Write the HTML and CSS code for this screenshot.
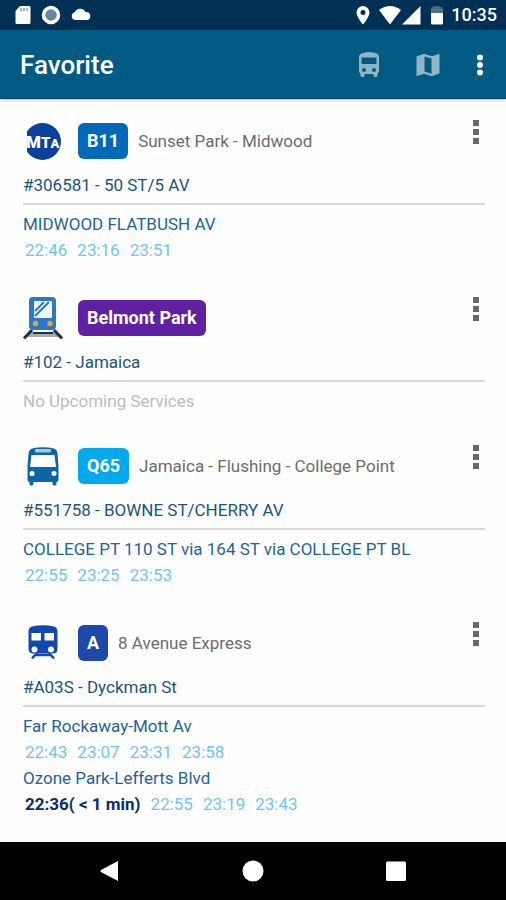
FILE: index.html
```html
<!DOCTYPE html>
<html lang="en">
<head>
<meta charset="utf-8">
<meta name="viewport" content="width=device-width, initial-scale=1">
<title>Favorite</title>
<link rel="stylesheet" href="styles.css">
</head>
<body>
<div class="status">
  <div class="status-left">
    <svg width="18" height="20" viewBox="0 0 18 20"><path d="M6 1h9q1.500 0 1.500 1.500v15q0 1.500-1.500 1.500H3q-1.500 0-1.500-1.500V6z" fill="#fff"/><path d="M7 3v3M10 3v3M13 3v3" stroke="#8d99a8" stroke-width="1.500"/></svg>
    <svg width="20" height="20" viewBox="0 0 20 20"><circle cx="10" cy="10" r="7.500" fill="#68869c" stroke="#fff" stroke-width="3.500"/></svg>
    <svg width="22" height="20" viewBox="0 0 22 20"><path d="M5 15a4 4 0 0 1-.3-7.800A6 6 0 0 1 15.500 7a4 4 0 0 1 1.500 8z" fill="#fff"/></svg>
  </div>
  <div class="status-right">
    <svg width="14" height="20" viewBox="0 0 14 20"><path fill-rule="evenodd" d="M7 1a6.500 6.500 0 0 1 6.500 6.500C13.500 12 7 19.500 7 19.500S.5 12 .5 7.500A6.500 6.500 0 0 1 7 1zm0 4a2.500 2.500 0 1 0 0 5 2.500 2.500 0 0 0 0-5z" fill="#fff"/></svg>
    <svg class="wifi" width="22" height="20" viewBox="0 0 22 20"><path d="M0 5Q11-3 22 5L11 19.500z" fill="#fff"/></svg>
    <svg width="19" height="20" viewBox="0 0 19 20"><path d="M18.500 1v18.500H0z" fill="#fff"/></svg>
    <svg class="battery" width="14" height="20" viewBox="0 0 14 20"><path d="M1 8V4q0-2 2-2 4-2 8 0 2 0 2 2v4z" fill="#4d7085"/><path d="M1 8h12v10q0 1.500-1.500 1.500h-9Q1 19.500 1 18z" fill="#fff"/></svg>
    <span class="clock">10:35</span>
  </div>
</div>
<header class="bar">
  <h1>Favorite</h1>
  <button class="action" aria-label="Buses"><svg width="22" height="26" viewBox="0 0 22 26"><path fill-rule="evenodd" d="M5 1Q11-1 17 1q4 .8 4 4v14q0 1.500-1.500 2.500v2q0 1.500-1.500 1.500h-1q-1.500 0-1.500-1.500V22h-9v1.500Q6.500 25 5 25H4q-1.500 0-1.500-1.500v-2Q1 20.500 1 19V5q0-3.200 4-4zM3.500 5.500V12h15V5.500zM6 16a2 2 0 1 0 0 4 2 2 0 0 0 0-4zm10 0a2 2 0 1 0 0 4 2 2 0 0 0 0-4z" fill="#8fb5c6"/></svg></button>
  <button class="action" aria-label="Map"><svg width="24" height="24" viewBox="0 0 24 24"><path fill-rule="evenodd" d="M.5 3.500L8 .8l8 2.400 7.500-2.400v19.700L16 23.200l-8-2.400-7.500 2.400zM8.500 3.500v15l7 2.200V5.600z" fill="#8fb5c6"/></svg></button>
  <button class="action more" aria-label="More options"><svg width="8" height="22" viewBox="0 0 8 22"><g fill="#fff"><circle cx="4" cy="3.500" r="3"/><circle cx="4" cy="11" r="3"/><circle cx="4" cy="18.500" r="3"/></g></svg></button>
</header>
<main class="list">
  <article class="card">
    <div class="head">
      <svg class="mode" viewBox="0 0 40 44"><circle cx="19.500" cy="22.500" r="18.500" fill="#0b419b"/><path d="M0 13l4-2v24l-4-2z" fill="#fff"/><text class="mta" x="3" y="29"><tspan font-size="17">M</tspan><tspan font-size="15">T</tspan><tspan font-size="13">A</tspan></text></svg>
      <span class="badge blue">B11</span><span class="name">Sunset Park - Midwood</span>
      <button class="menu" aria-label="Options"><svg width="8" height="26" viewBox="0 0 8 26"><path d="M1 1h6v6H1zM1 10h6v6H1zM1 19h6v6H1z" fill="#686868"/></svg></button>
    </div>
    <p class="stop">#306581 - 50 ST/5 AV</p>
    <div class="services">
      <p>MIDWOOD FLATBUSH AV</p>
      <div class="times"><time>22:46</time><time>23:16</time><time>23:51</time></div>
    </div>
  </article>
  <article class="card">
    <div class="head">
      <svg class="mode" viewBox="0 0 40 44"><path d="M8 36h24l6 5H2z" fill="#aaa"/><path d="M9 34L1 42.500M31 34l8 8.500" stroke="#193348" stroke-width="3"/><path d="M10 37h20" stroke="#193348" stroke-width="2"/><rect x="6" y="1" width="27" height="33" rx="4" fill="#2d78c5"/><rect x="11" y="5" width="18" height="17" rx="1" fill="#edf4f8"/><path d="M12 15l9-9M12 20L26 6" stroke="#2d78c5" stroke-width="2"/><circle cx="12.500" cy="27.500" r="2.700" fill="#e9a52d"/><circle cx="27" cy="27.500" r="2.700" fill="#e9a52d"/></svg>
      <span class="badge purple">Belmont Park</span>
      <button class="menu" aria-label="Options"><svg width="8" height="26" viewBox="0 0 8 26"><path d="M1 1h6v6H1zM1 10h6v6H1zM1 19h6v6H1z" fill="#686868"/></svg></button>
    </div>
    <p class="stop">#102 - Jamaica</p>
    <p class="empty">No Upcoming Services</p>
  </article>
  <article class="card">
    <div class="head">
      <svg class="mode" viewBox="0 0 40 44"><path fill-rule="evenodd" d="M9 4.500Q20 2 31 4.500q3 1 3.500 5l1 13V36q0 1.500-2 2v2q0 1.500-2 1.500t-2-1.500v-2h-19v2q0 1.500-2 1.500T6.500 40v-2q-2-.5-2-2V22.500l1-13q.5-4 3.500-5zM8.500 11L7 23h26l-1.500-12zM9 27a2.500 2.500 0 1 0 0 5 2.500 2.500 0 0 0 0-5zm22 0a2.500 2.500 0 1 0 0 5 2.500 2.500 0 0 0 0-5z" fill="#0c65a5"/><rect x="12" y="5" width="16" height="3.500" rx="1" fill="#a9c9e0"/></svg>
      <span class="badge cyan">Q65</span><span class="name">Jamaica - Flushing - College Point</span>
      <button class="menu" aria-label="Options"><svg width="8" height="26" viewBox="0 0 8 26"><path d="M1 1h6v6H1zM1 10h6v6H1zM1 19h6v6H1z" fill="#686868"/></svg></button>
    </div>
    <p class="stop">#551758 - BOWNE ST/CHERRY AV</p>
    <div class="services">
      <p>COLLEGE PT 110 ST via 164 ST via COLLEGE PT BL</p>
      <div class="times"><time>22:55</time><time>23:25</time><time>23:53</time></div>
    </div>
  </article>
  <article class="card">
    <div class="head">
      <svg class="mode" viewBox="0 0 40 44"><path fill-rule="evenodd" d="M9 5.500Q20 3 31 5.500q3.500 1 3.500 5V28q0 4-4 4.500H9.500q-4-.5-4-4.500V10.500q0-4 3.500-5zM8.500 12v7.500h9.500V12zm13 0v7.500h9.500V12zM11.500 25.500a3 3 0 1 0 0 6 3 3 0 0 0 0-6zm16.500 0a3 3 0 1 0 0 6 3 3 0 0 0 0-6z" fill="#1248ab"/><path d="M14 32l-5 5.500M26 32l5 5.500M12 34h16" stroke="#1248ab" stroke-width="2.500"/></svg>
      <span class="badge royal">A</span><span class="name">8 Avenue Express</span>
      <button class="menu" aria-label="Options"><svg width="8" height="26" viewBox="0 0 8 26"><path d="M1 1h6v6H1zM1 10h6v6H1zM1 19h6v6H1z" fill="#686868"/></svg></button>
    </div>
    <p class="stop">#A03S - Dyckman St</p>
    <div class="services">
      <p>Far Rockaway-Mott Av</p>
      <div class="times"><time>22:43</time><time>23:07</time><time>23:31</time><time>23:58</time></div>
      <p>Ozone Park-Lefferts Blvd</p>
      <div class="times"><time class="soon">22:36( &lt; 1 min)</time><time>22:55</time><time>23:19</time><time>23:43</time></div>
    </div>
  </article>
</main>
<nav class="system">
  <button aria-label="Back"><svg width="22" height="22" viewBox="0 0 22 22"><path d="M19 1v20L2 12q-1.500-1 0-2z" fill="#fff"/></svg></button>
  <button aria-label="Home"><svg width="22" height="22" viewBox="0 0 22 22"><circle cx="11" cy="11" r="10.500" fill="#fff"/></svg></button>
  <button aria-label="Recent apps"><svg width="22" height="22" viewBox="0 0 22 22"><rect x="1" y="1.500" width="20" height="19.500" rx="1.500" fill="#fff"/></svg></button>
</nav>
</body>
</html>
```
FILE: styles.css
```css
* { box-sizing: border-box; }
body {
  margin: 0;
  min-height: 100vh;
  display: flex;
  flex-direction: column;
  background: #fefefe;
  font: 17px/26px Roboto, sans-serif;
  color: #1f639b;
}
p, h1 { margin: 0; font-weight: 400; }
button { border: 0; padding: 0; background: none; display: flex; align-items: center; justify-content: center; cursor: pointer; }
svg { display: block; flex: none; }

.status {
  height: 30px;
  padding: 0 9px 0 14px;
  display: flex;
  align-items: center;
  justify-content: space-between;
  background: #003055;
}
.status-left, .status-right { display: flex; align-items: center; }
.status-left { gap: 9px; }
.wifi { margin: 0 1px 0 9px; }
.battery { margin: 0 7px 0 9px; }
.clock { color: #fff; font-size: 18px; font-weight: 500; }

.bar {
  height: 69px;
  padding: 2px 14px 0 20px;
  display: flex;
  align-items: center;
  background: #005a82;
  border-bottom: 1px solid #003c68;
  box-shadow: 0 1px 3px #0004;
}
.bar h1 { margin-right: auto; color: #fff; font-size: 26px; font-weight: 500; }
.action { width: 24px; height: 40px; }
.action + .action { margin-left: 35px; }
.action + .more { margin-left: 28px; }

.list {
  flex: 1;
  padding: 20px 21px 20px 23px;
  display: flex;
  flex-direction: column;
  gap: 30px;
}
.head { display: flex; align-items: center; min-height: 44px; margin-bottom: 9px; }
.mode { width: 40px; height: 44px; margin-right: 15px; }
.mta { fill: #fff; font-family: Roboto, sans-serif; font-weight: 900; }
.badge {
  padding: 5px 9px;
  border-radius: 6px;
  color: #fff;
  font-size: 18px;
  font-weight: 700;
}
.blue { background: #0069b8; }
.purple { background: #5f219f; }
.cyan { background: #00a9ec; }
.royal { background: #1f48ab; }
.name { margin-left: 10px; color: #6c6c6c; }
.menu { align-self: flex-start; margin-left: auto; width: 18px; height: 26px; }
.stop { padding-bottom: 5px; border-bottom: 2px solid #d9d9d9; margin-bottom: 6px; color: #1a547f; }
.services { margin-bottom: 3px; }
.times { display: flex; flex-wrap: wrap; gap: 0 10px; padding-left: 2px; color: #70c4fa; }
.soon { color: #0b2c68; font-weight: 700; }
.empty { color: #bcbcbc; }

.system {
  height: 58px;
  display: flex;
  align-items: center;
  justify-content: center;
  gap: 121px;
  background: #000;
}
.system button { width: 22px; height: 22px; }
```
